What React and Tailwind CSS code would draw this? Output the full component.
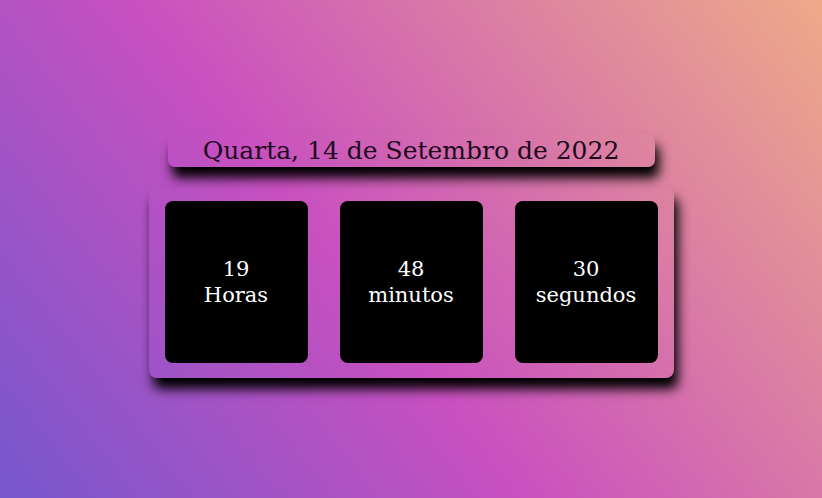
import React from "react";

const cards = [
  { n: "19", l: "Horas" },
  { n: "48", l: "minutos" },
  { n: "30", l: "segundos" },
];

export default function App() {
  return (
    <div
      className="w-full h-[498px] flex flex-col items-center justify-center pt-[14px] bg-[linear-gradient(52deg,#7657cc_0%,#c850c0_43%,#eeaa88_100%)]"
      style={{ fontFamily: '"DejaVu Serif", "Liberation Serif", serif' }}
    >
      <div className="w-[487px] h-[33px] rounded-[7px] flex items-center justify-center shadow-[4px_11px_12px_#000] text-[#1c0a1c] text-[25px] leading-none">
        Quarta, 14 de Setembro de 2022
      </div>
      <div className="mt-[20px] w-[525px] rounded-[8px] px-[16px] pt-[14px] pb-[15px] flex gap-[32px] shadow-[4px_11px_12px_#000]">
        {cards.map((c) => (
          <div
            key={c.l}
            className="w-[143px] h-[162px] rounded-[8px] bg-black flex flex-col items-center justify-center text-white text-[21px] leading-[26px]"
          >
            <span>{c.n}</span>
            <span>{c.l}</span>
          </div>
        ))}
      </div>
    </div>
  );
}
